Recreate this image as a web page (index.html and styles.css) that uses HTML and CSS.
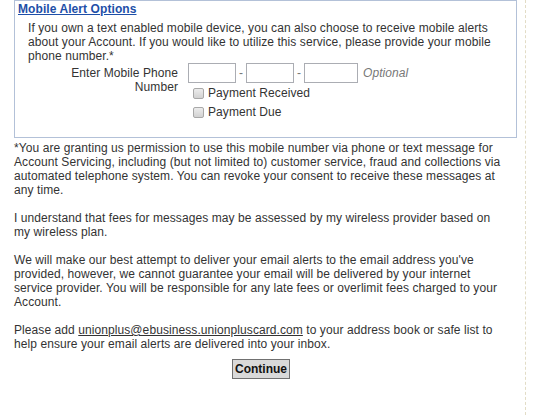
FILE: index.html
```
<!DOCTYPE html>
<html lang="en">
<head>
    <meta charset="UTF-8">
    <meta name="viewport" content="width=device-width, initial-scale=1.0">
    <title>Mobile Alert Options</title>
    <link rel="stylesheet" href="styles.css">
</head>
<body>
	<div class="page">
		<div class="panel">
			<h3 class="panel-title">Mobile Alert Options</h3>
			<p class="intro">If you own a text enabled mobile device, you can also choose to receive mobile alerts about your Account. If you would like to utilize this service, please provide your mobile phone number.*</p>
			<div class="phone-row">
				<label class="phone-label" for="area">Enter Mobile Phone<br>Number</label>
				<div class="phone-fields">
					<div class="phone-inputs">
						<input id="area" class="num" type="text" maxlength="3">
						<span class="dash">-</span>
						<input id="prefix" class="num" type="text" maxlength="3">
						<span class="dash">-</span>
						<input id="line" class="num wide" type="text" maxlength="4">
						<em class="optional">Optional</em>
					</div>
					<label class="check"><input type="checkbox"> Payment Received</label>
					<label class="check"><input type="checkbox"> Payment Due</label>
				</div>
			</div>
		</div>

		<div class="terms">
			<p>*You are granting us permission to use this mobile number via phone or text message for Account Servicing, including (but not limited to) customer service, fraud and collections via automated telephone system. You can revoke your consent to receive these messages at any time.</p>
			<p>I understand that fees for messages may be assessed by my wireless provider based on my wireless plan.</p>
			<p>We will make our best attempt to deliver your email alerts to the email address you've provided, however, we cannot guarantee your email will be delivered by your internet service provider. You will be responsible for any late fees or overlimit fees charged to your Account.</p>
			<p>Please add <a href="#">unionplus@ebusiness.unionpluscard.com</a> to your address book or safe list to help ensure your email alerts are delivered into your inbox.</p>
		</div>

		<div class="actions">
			<button type="button" class="btn">Continue</button>
		</div>
	</div>
</body>
</html>
```
FILE: styles.css
```
* {
	box-sizing: border-box;
}
body {
	margin: 0;
	font-family: "Liberation Sans", Arial, sans-serif;
	font-size: 12px;
	letter-spacing: 0.08px;
	color: #333;
	background: #fff;
}
.page {
	width: 526px;
	min-height: 415px;
	padding: 0 0 0 14px;
	border-right: 1px dashed #e2dcc6;
}
.panel {
	width: 503px;
	height: 138px;
	border: 1px solid #b3c1d8;
	padding: 0 3px;
}
.panel-title {
	margin: 1px 0 0;
	font-size: 12px;
	font-weight: bold;
	line-height: 14px;
	color: #1e4fa8;
	text-decoration: underline;
}
.intro {
	margin: 5px 0 0 10px;
	line-height: 14px;
}
.phone-row {
	display: flex;
	margin-top: 0;
}
.phone-label {
	width: 160px;
	text-align: right;
	line-height: 14px;
	padding-top: 3px;
}
.phone-fields {
	margin-left: 10px;
}
.phone-inputs {
	display: flex;
	align-items: center;
}
.num {
	width: 48px;
	height: 20px;
	border: 1px solid #abadb3;
	padding: 1px 3px;
	font: inherit;
}
.num.wide {
	width: 54px;
}
.dash {
	width: 10px;
	text-align: center;
	color: #777;
}
.optional {
	margin-left: 5px;
	color: #777;
}
.check {
	display: flex;
	align-items: center;
	margin: 3px 0 0 5px;
	line-height: 14px;
}
.check + .check {
	margin-top: 5px;
}
.check input {
	appearance: none;
	width: 11px;
	height: 11px;
	margin: 0 4px 0 0;
	border: 1px solid #a8a8a8;
	border-radius: 2px;
	background: linear-gradient(#ececec, #d2d2d2);
}
.terms p {
	margin: 3px 0 14px;
	line-height: 14px;
	width: 492px;
}
.terms p + p {
	margin-top: 0;
}
.terms a {
	color: #333;
}
.actions {
	width: 494px;
	text-align: center;
	margin-top: -6px;
}
.btn {
	font-family: "Liberation Sans", Arial, sans-serif;
	font-size: 12px;
	font-weight: bold;
	color: #111;
	background: #d9d9d9;
	border: 1px solid #707070;
	padding: 2px 2px;
	cursor: pointer;
}
```
